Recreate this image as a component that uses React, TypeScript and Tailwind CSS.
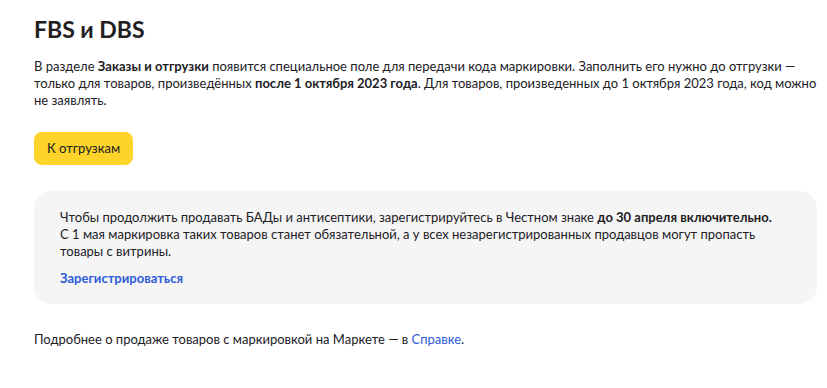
import React from "react";

export default function App() {
  return (
    <div className="min-h-screen bg-white pl-[34px] pr-[10px] pt-[14px] text-[#21201f]" style={{ fontFamily: 'Lato, "Open Sans", sans-serif' }}>
      <h1 className="text-[23px] font-bold leading-[30px]">FBS и DBS</h1>

      <p className="mt-[14px] w-[783px] text-[13px] leading-[17px]">
        В разделе <b>Заказы и отгрузки</b> появится специальное поле для передачи кода маркировки. Заполнить его нужно до отгрузки — только для товаров, произведённых <b>после 1 октября 2023 года</b>. Для товаров, произведенных до 1 октября 2023 года, код можно не заявлять.
      </p>

      <button className="mt-[23px] h-[33px] rounded-[8px] bg-[#fed42b] px-[13px] text-[13px] text-[#21201f]">
        К отгрузкам
      </button>

      <div className="mt-[26px] w-[783px] rounded-[18px] bg-[#f5f5f5] px-[26px] pt-[18px] pb-[17px] text-[13px] leading-[17px]">
        <p>
          Чтобы продолжить продавать БАДы и антисептики, зарегистрируйтесь в Честном знаке <b>до 30 апреля включительно.</b>
          <br />
          С 1 мая маркировка таких товаров станет обязательной, а у всех незарегистрированных продавцов могут пропасть товары с витрины.
        </p>
        <a href="#" className="mt-[10px] inline-block font-bold text-[#2e5bd7]">
          Зарегистрироваться
        </a>
      </div>

      <p className="mt-[27px] text-[13px] leading-[17px]">
        Подробнее о продаже товаров с маркировкой на Маркете — в <a href="#" className="text-[#2e5bd7]">Справке</a>.
      </p>
    </div>
  );
}
